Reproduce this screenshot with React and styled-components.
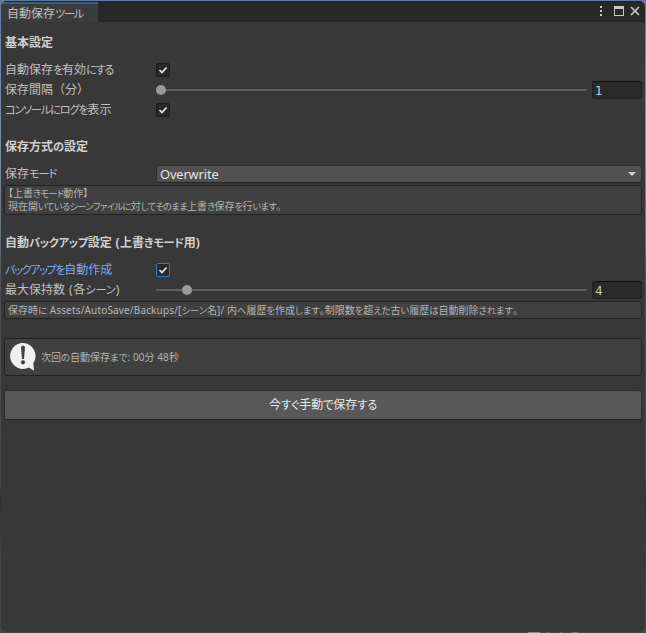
import React from 'react';
import styled, { createGlobalStyle } from 'styled-components';

const Global = createGlobalStyle`
  * { box-sizing: border-box; }
  html, body { margin: 0; background: #383838; }
  body { font-family: "Noto Sans", "Noto Sans CJK JP", sans-serif; font-feature-settings: "palt"; }
`;

const Backdrop = styled.div`
  height: 633px;
  padding: 1px;
  overflow: hidden;
  background:
    linear-gradient(90deg, transparent 528px, #8a8a8a 528px 540px, transparent 540px 547px, #777 547px 549px, transparent 549px 560px, #666 560px 562px, transparent 562px 572px, #777 572px 578px, transparent 578px) bottom / 100% 1px no-repeat,
    linear-gradient(180deg, #66799b 0, #7189aa 60px, #7c8d96 160px, #69737a 230px, #4c4f50 290px, #484848 480px, #303030 500px, #444 560px, #484848 100%);
`;
const Window = styled.main`
  height: 631px;
  border-radius: 6px;
  overflow: hidden;
  background: #383838;
  color: #c0c0c0;
`;
const TitleBar = styled.header`
  height: 21px;
  display: flex;
  justify-content: space-between;
  background: #282828;
  border-top: 1px solid #222;
  border-bottom: 1px solid #242424;
`;
const Tab = styled.div`
  width: 97px;
  height: 20px;
  padding: 2px 0 0 6px;
  display: flex;
  align-items: center;
  background: #3c3c3c;
  border-top: 2px solid #3a5f80;
`;
const WindowButtons = styled.svg`
  width: 48px;
  height: 20px;
  display: block;
`;
const Content = styled.div`
  padding: 10px 3px 0 4px;
`;
const TextLine = styled.span`
  display: inline-block;
  white-space: nowrap;
  font-size: ${p => p.$size}px;
  line-height: ${p => p.$line}px;
  font-weight: ${p => (p.$bold ? 700 : 400)};
  font-feature-settings: ${p => (p.$full ? 'normal' : '"palt"')};
`;
const Kana = styled.span`
  font-size: 0.93em;
  letter-spacing: ${p => p.$track}px;
`;
const Latin = styled.span`
  letter-spacing: ${p => p.$track}px;
`;
const Heading = styled.h2`
  height: 18px;
  margin: ${p => p.$top || 0}px 0 8px;
  display: flex;
  align-items: center;
  color: #d0d0d0;
`;
const Row = styled.div`
  height: 20px;
  display: grid;
  grid-template-columns: 151px 1fr;
  align-items: center;
  color: ${p => (p.$active ? '#7faaf0' : '#c0c0c0')};
`;
const Check = styled.div`
  width: 14px;
  height: 14px;
  background: #292929;
  border: 1px solid ${p => (p.$focus ? '#3a79bb' : '#1b1b1b')};
  border-radius: 2px;
  svg { display: block; width: 12px; height: 12px; }
`;
const SliderRow = styled.div`
  display: grid;
  grid-template-columns: 431px 50px;
  column-gap: 5px;
  align-items: center;
`;
const Track = styled.div`
  height: 10px;
  padding-left: ${p => p.$value}px;
  display: flex;
  align-items: center;
  background: linear-gradient(#5e5e5e, #5e5e5e) center / 100% 2px no-repeat;
`;
const Thumb = styled.div`
  width: 10px;
  height: 10px;
  border-radius: 50%;
  background: #999;
`;
const NumberField = styled.div`
  height: 18px;
  padding: 1px 0 0 2px;
  display: flex;
  align-items: center;
  font: 12px/16px "DejaVu Sans", sans-serif;
  background: #2a2a2a;
  border: 1px solid #212121;
  border-top-color: #0d0d0d;
  border-radius: 3px;
  color: #c8c8c8;
`;
const Select = styled.div`
  height: 18px;
  padding: 0 5px 0 3px;
  display: flex;
  justify-content: space-between;
  align-items: center;
  background: #515151;
  border: 1px solid #303030;
  border-bottom-color: #242424;
  border-radius: 3px;
  color: #e4e4e4;
`;
const HelpBox = styled.div`
  height: ${p => p.$height}px;
  margin: ${p => p.$top || 0}px 0 0 -1px;
  padding-left: 3px;
  display: flex;
  align-items: center;
  gap: 4px;
  background: #404040;
  border: 1px solid #232323;
  border-radius: 3px;
  color: #b4b4b4;
`;
const Lines = styled.div`
  display: flex;
  flex-direction: column;
  align-items: flex-start;
`;
const SaveButton = styled.button`
  width: 638px;
  height: 30px;
  margin: 14px 0 0 -1px;
  padding: 0;
  display: flex;
  align-items: center;
  justify-content: center;
  font: inherit;
  color: #e8e8e8;
  background: #585858;
  border: 1px solid #303030;
  border-bottom-color: #242424;
  border-radius: 3px;
`;

// Kana are set narrower than kanji; each run carries its own tracking.
const Text = ({ children, size = 12, line = 18, kana = 0, latin = 0, bold, full }) => (
  <TextLine $size={size} $line={line} $bold={bold} $full={full}>
    {children.split(/([\u3041-\u30ff]+|[ -~]+)/).filter(Boolean).map((run, i) => {
      if (/^[\u3041-\u30ff]/.test(run)) return <Kana key={i} $track={kana}>{run}</Kana>;
      if (/^[ -~]/.test(run)) return <Latin key={i} $track={latin}>{run}</Latin>;
      return run;
    })}
  </TextLine>
);

const Checkbox = ({ focus }) => (
  <Check $focus={focus}>
    <svg viewBox="0 0 12 12"><path d="M2.5 6 L5 8.5 L9.5 3.5" fill="none" stroke="#ececec" strokeWidth="1.7" /></svg>
  </Check>
);

const Slider = ({ offset, value }) => (
  <SliderRow>
    <Track $value={offset}><Thumb /></Track>
    <NumberField>{value}</NumberField>
  </SliderRow>
);

export default function App() {
  return (
    <>
      <Global />
      <Backdrop>
        <Window>
          <TitleBar>
            <Tab><Text kana={-1.2}>自動保存ツール</Text></Tab>
            <WindowButtons viewBox="0 0 48 20">
              <g fill="#c8c8c8">
                <rect x="3" y="4" width="2" height="2" />
                <rect x="3" y="8" width="2" height="2" />
                <rect x="3" y="12" width="2" height="2" />
                <path d="M17 4h10v10H17zM18 7v6h8V7z" fillRule="evenodd" />
              </g>
              <path d="M34 5l8 8M42 5l-8 8" stroke="#c8c8c8" strokeWidth="1.7" />
            </WindowButtons>
          </TitleBar>
          <Content>
            <Heading $top={2}><Text bold>基本設定</Text></Heading>
            <Row><Text kana={-1.3}>自動保存を有効にする</Text><Checkbox /></Row>
            <Row><Text full>保存間隔（分）</Text><Slider offset={0} value="1" /></Row>
            <Row><Text kana={-1.2}>コンソールにログを表示</Text><Checkbox /></Row>
            <Heading $top={18}><Text bold>保存方式の設定</Text></Heading>
            <Row>
              <Text kana={-1}>保存モード</Text>
              <Select>
                <Text size={12.8} line={16} latin={-0.1}>Overwrite</Text>
                <svg width="8" height="4" viewBox="0 0 8 4"><path d="M0 0h8L4 4z" fill="#d0d0d0" /></svg>
              </Select>
            </Row>
            <HelpBox $height={30} $top={1}>
              <Lines>
                <Text size={10} line={12} kana={-0.8}>【上書きモード動作】</Text>
                <Text size={10} line={12} kana={-0.66}>現在開いているシーンファイルに対してそのまま上書き保存を行います。</Text>
              </Lines>
            </HelpBox>
            <Heading $top={19}><Text bold kana={-0.3} latin={0.5}>自動バックアップ設定 (上書きモード用)</Text></Heading>
            <Row $active><Text kana={-1.4}>バックアップを自動作成</Text><Checkbox focus /></Row>
            <Row><Text kana={-0.1} latin={0.8}>最大保持数 (各シーン)</Text><Slider offset={26} value="4" /></Row>
            <HelpBox $height={18} $top={1}>
              <Text size={10} line={12} kana={-0.05} latin={0.16}>保存時に Assets/AutoSave/Backups/[シーン名]/ 内へ履歴を作成します。制限数を超えた古い履歴は自動削除されます。</Text>
            </HelpBox>
            <HelpBox $height={38} $top={19}>
              <svg width="29" height="30" viewBox="-1 0 29 30">
                <path d="M14 1a13 13 0 1 0 6 24.6L25 28.7l-.7-7.5A13 13 0 0 0 14 1z" fill="#f0f0f0" />
                <path d="M12 5.5a2 2 0 0 1 4 0L15 17h-2z" fill="#404040" />
                <circle cx="14" cy="20.3" r="2.1" fill="#404040" />
              </svg>
              <Text size={10} line={12} latin={0.1} kana={0.1}>次回の自動保存まで: 00分 48秒</Text>
            </HelpBox>
            <SaveButton><Text kana={-0.2}>今すぐ手動で保存する</Text></SaveButton>
          </Content>
        </Window>
      </Backdrop>
    </>
  );
}
